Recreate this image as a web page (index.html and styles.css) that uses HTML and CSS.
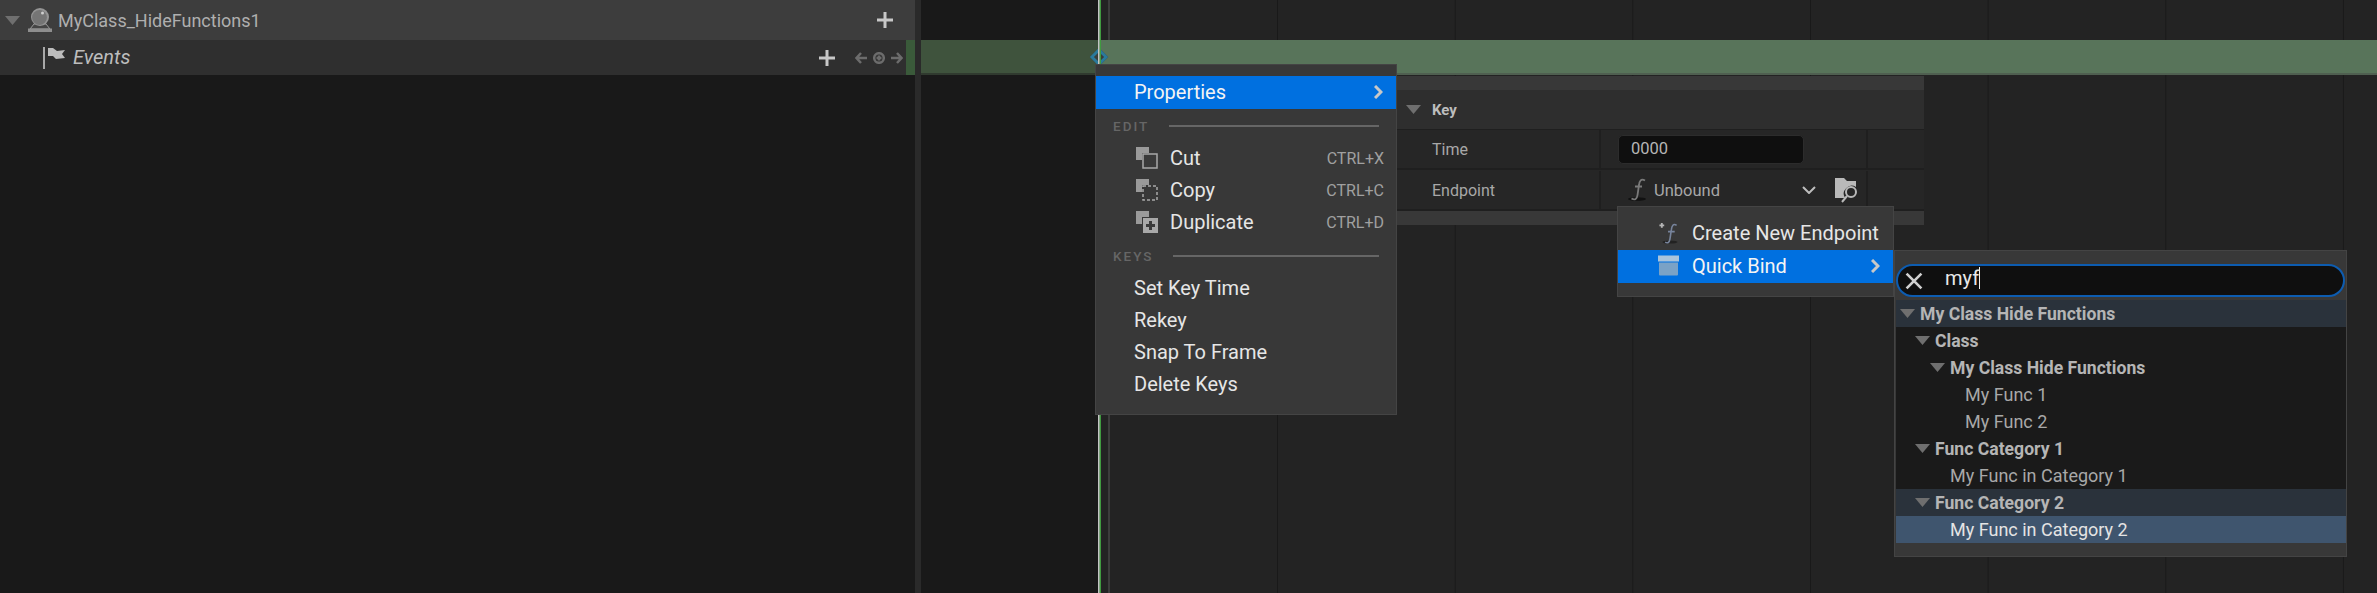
FILE: index.html
```html
<!DOCTYPE html>
<html lang="en">
<head>
    <meta charset="UTF-8">
    <title>Sequencer - Quick Bind</title>
    <link rel="stylesheet" href="styles.css">
</head>
<body>
    <div class="outliner">
        <div class="binding-row">
            <svg class="tri tri-outliner" viewBox="0 0 15 9"><path d="M0 0h15L7.5 9z"/></svg>
            <svg class="actor-icon" viewBox="0 0 24 24">
                <path d="M6 16h12l4 5H2z" fill="#454545" stroke="#9a9a9a" stroke-width="1"/>
                <circle cx="12" cy="9" r="9" fill="#959595"/>
                <circle cx="11.500" cy="9.500" r="7.400" fill="#757575"/>
                <circle cx="14.500" cy="5" r="1.500" fill="#cfcfcf"/>
                <path d="M0 20.500h24V24H0z" fill="#8e8e8e"/>
            </svg>
            <span class="binding-name">MyClass_HideFunctions1</span>
            <svg class="plus" viewBox="0 0 16 16"><path d="M6.500 0h3v6.500H16v3H9.500V16h-3V9.500H0v-3h6.500z"/></svg>
            <span class="binding-end"></span>
        </div>
        <div class="track-row">
            <svg class="flag-icon" viewBox="0 0 23 22">
                <path d="M0 0h2v22H0z" fill="#a8a8a8"/>
                <path d="M5 1h5l4 3 8-1-3 4 3 4-9 1-3-3H5z" fill="#bdbdbd"/>
            </svg>
            <span class="track-name">Events</span>
            <svg class="plus plus-track" viewBox="0 0 16 16"><path d="M6.500 0h3v6.500H16v3H9.500V16h-3V9.500H0v-3h6.500z"/></svg>
            <div class="key-nav">
                <svg viewBox="0 0 12 12"><path d="M6 1 1.500 6 6 11M2 6h10" /></svg>
                <svg viewBox="0 0 12 12"><circle cx="6" cy="6" r="4.800"/><path d="M6 3.500v5M3.500 6h5"/></svg>
                <svg viewBox="0 0 12 12"><path d="M6 1l4.500 5L6 11M10 6H0"/></svg>
            </div>
            <span class="track-tint"></span>
        </div>
    </div>

    <div class="splitter"></div>

    <div class="timeline">
        <div class="track-bar">
            <div class="bar-before"></div>
            <div class="bar-after"></div>
        </div>
    </div>

    <div class="key-diamond"></div>
    <div class="playhead"></div>

    <div class="details">
        <div class="details-cap"></div>
        <div class="details-header">
            <svg class="tri" viewBox="0 0 15 9"><path d="M0 0h15L7.5 9z"/></svg>
            <span>Key</span>
        </div>
        <div class="details-row">
            <div class="details-name">Time</div>
            <div class="details-value">
                <div class="num-input">0000</div>
            </div>
            <div class="details-ext"></div>
        </div>
        <div class="details-row details-row-last">
            <div class="details-name">Endpoint</div>
            <div class="details-value">
                <svg class="func-icon" viewBox="0 0 20 24">
                    <ellipse cx="9" cy="21" rx="9" ry="1.800" fill="#111"/>
                    <path d="M17 2.500C13 0 11.500 3 11 7L9.500 17C9 21 7 22.500 3.500 20.500M7 8.500h7" fill="none" stroke="#7a7a7a" stroke-width="1.800"/>
                </svg>
                <span class="unbound">Unbound</span>
                <svg class="chevron-down" viewBox="0 0 14 8"><path d="M1 1l6 6 6-6"/></svg>
                <svg class="folder-search" viewBox="0 0 24 25">
                    <path d="M0 0h9l3 3h9v6a8 8 0 0 0-11 11H0z" fill="#b9b9b9"/>
                    <circle cx="16" cy="14" r="5" fill="none" stroke="#b9b9b9" stroke-width="2"/>
                    <path d="M12 18l-5 6" stroke="#b9b9b9" stroke-width="2"/>
                </svg>
            </div>
            <div class="details-ext"></div>
        </div>
        <div class="details-cap"></div>
    </div>

    <div class="menu menu-key">
        <div class="menu-item active">
            <span class="menu-label">Properties</span>
            <svg class="chevron" viewBox="0 0 9 14"><path d="M1 1l6 6-6 6"/></svg>
        </div>
        <div class="menu-section"><span>EDIT</span><i></i></div>
        <div class="menu-item with-icon">
            <svg class="edit-icon" viewBox="0 0 22 22">
                <path d="M0 0h13v6H6v7H0z" fill="#9a9a9a"/>
                <rect x="7" y="7" width="14" height="14" fill="#3a3a3a" stroke="#a8a8a8" stroke-width="1.500"/>
            </svg>
            <span class="menu-label">Cut</span>
            <span class="shortcut">CTRL+X</span>
        </div>
        <div class="menu-item with-icon">
            <svg class="edit-icon" viewBox="0 0 22 22">
                <path d="M0 0h13v6H6v7H0z" fill="#9a9a9a"/>
                <rect x="7" y="7" width="14" height="14" fill="none" stroke="#a8a8a8" stroke-width="1.500" stroke-dasharray="3 2"/>
            </svg>
            <span class="menu-label">Copy</span>
            <span class="shortcut">CTRL+C</span>
        </div>
        <div class="menu-item with-icon">
            <svg class="edit-icon" viewBox="0 0 22 22">
                <path d="M0 0h13v6H6v7H0z" fill="#9a9a9a"/>
                <path d="M7 7h15v15H7z" fill="#a8a8a8"/>
                <path d="M13 10h3v3h3v3h-3v3h-3v-3h-3v-3h3z" fill="#3a3a3a"/>
            </svg>
            <span class="menu-label">Duplicate</span>
            <span class="shortcut">CTRL+D</span>
        </div>
        <div class="menu-section"><span>KEYS</span><i></i></div>
        <div class="menu-item"><span class="menu-label">Set Key Time</span></div>
        <div class="menu-item"><span class="menu-label">Rekey</span></div>
        <div class="menu-item"><span class="menu-label">Snap To Frame</span></div>
        <div class="menu-item"><span class="menu-label">Delete Keys</span></div>
    </div>

    <div class="menu menu-endpoint">
        <div class="menu-item">
            <svg class="bind-icon" viewBox="0 0 21 22">
                <path d="M1 2.500h5M3.500 0v5" stroke="#b5b5b5" stroke-width="2"/>
                <ellipse cx="12" cy="20" rx="8" ry="1.600" fill="#222"/>
                <path d="M19 2.500C15.500 0 14 3 13.500 7L12 17C11.500 20.500 9.500 21.500 7 20M10 9h7" fill="none" stroke="#77849c" stroke-width="1.700"/>
            </svg>
            <span class="menu-label">Create New Endpoint</span>
        </div>
        <div class="menu-item active">
            <svg class="bind-icon" viewBox="0 0 21 20">
                <path d="M0 0h21v6H0z" fill="#a9c4dc"/>
                <path d="M1 7h19v12a1 1 0 0 1-1 1H2a1 1 0 0 1-1-1z" fill="#7aa2c6"/>
            </svg>
            <span class="menu-label">Quick Bind</span>
            <svg class="chevron" viewBox="0 0 9 14"><path d="M1 1l6 6-6 6"/></svg>
        </div>
    </div>

    <div class="menu menu-bind">
        <div class="search-box">
            <svg class="clear-icon" viewBox="0 0 17 17"><path d="M1.500 1.500l14 14M15.500 1.500l-14 14"/></svg>
            <span class="search-text">myf</span>
            <span class="caret"></span>
        </div>
        <ul class="bind-tree">
            <li class="group depth-0 tinted"><svg class="tri" viewBox="0 0 15 9"><path d="M0 0h15L7.500 9z"/></svg>My Class Hide Functions</li>
            <li class="group depth-1"><svg class="tri" viewBox="0 0 15 9"><path d="M0 0h15L7.500 9z"/></svg>Class</li>
            <li class="group depth-2"><svg class="tri" viewBox="0 0 15 9"><path d="M0 0h15L7.500 9z"/></svg>My Class Hide Functions</li>
            <li class="leaf depth-3">My Func 1</li>
            <li class="leaf depth-3">My Func 2</li>
            <li class="group depth-1"><svg class="tri" viewBox="0 0 15 9"><path d="M0 0h15L7.500 9z"/></svg>Func Category 1</li>
            <li class="leaf depth-2">My Func in Category 1</li>
            <li class="group depth-1 tinted"><svg class="tri" viewBox="0 0 15 9"><path d="M0 0h15L7.500 9z"/></svg>Func Category 2</li>
            <li class="leaf depth-2 selected">My Func in Category 2</li>
        </ul>
    </div>
</body>
</html>
```

FILE: styles.css
```css
* {
    box-sizing: border-box;
}
html, body {
    height: 100%;
}
body {
    margin: 0;
    display: flex;
    position: relative;
    overflow: hidden;
    background: #232323;
    font-family: Roboto, "Liberation Sans", sans-serif;
    font-size: 16px;
    color: #c0c0c0;
}

/* left column */
.outliner {
    width: 915px;
    flex: none;
    background: #191919;
}
.binding-row, .track-row {
    display: flex;
    align-items: center;
}
.binding-row {
    height: 40px;
    background: #3d3d3d;
    padding-left: 5px;
}
.track-row {
    height: 35px;
    background: #2f2f2f;
    padding-left: 43px;
}
.tri {
    width: 15px;
    height: 9px;
    flex: none;
    fill: #6f6f6f;
}
.actor-icon {
    width: 24px;
    height: 24px;
    margin-left: 8px;
    flex: none;
}
.binding-name {
    margin-left: 6px;
    font-size: 18px;
    color: #afafaf;
}
.plus {
    width: 16px;
    height: 16px;
    fill: #c8c8c8;
    flex: none;
    margin-left: auto;
}
.binding-end {
    width: 22px;
    flex: none;
}
.flag-icon {
    width: 23px;
    height: 22px;
    flex: none;
}
.track-name {
    margin: 0 0 2px 7px;
    font-size: 20px;
    font-style: italic;
    color: #bdbdbd;
}
.key-nav {
    display: flex;
    gap: 6px;
    margin-left: 20px;
}
.key-nav svg {
    width: 12px;
    height: 12px;
    fill: none;
    stroke: #6c6c6c;
    stroke-width: 2.500;
}
.track-tint {
    width: 9px;
    height: 35px;
    margin-left: 3px;
    background: #3a5a3a;
}

.splitter {
    width: 6px;
    flex: none;
    background: #2a2a2a;
}

/* timeline */
.timeline {
    flex: 1;
    padding-top: 40px;
    background-color: #232323;
    background-image:
        linear-gradient(90deg, #191919 177px, transparent 177px),
        linear-gradient(90deg, transparent 187px, #3c3c3c 187px, #3c3c3c 189px, transparent 189px),
        linear-gradient(90deg, #191919 1px, transparent 1px);
    background-size: 100% 100%, 100% 100%, 177.67px 100%;
    background-position: 0 0, 0 0, 356px 0;
}
.track-bar {
    display: flex;
    height: 35px;
}
.bar-before {
    width: 177px;
    background: #3f533d;
    border-bottom: 2px solid #303a2f;
}
.bar-after {
    flex: 1;
    background: #58745a;
    border-bottom: 2px solid #4f5f50;
}
.playhead {
    position: absolute;
    left: 1098px;
    top: 0;
    width: 3px;
    height: 100%;
    background: linear-gradient(90deg, #c4c4c4 1px, #7fa37f 1px, #7fa37f 2px, #3f9a3f 2px);
}
.key-diamond {
    position: absolute;
    left: 1090px;
    top: 48px;
    width: 18px;
    height: 18px;
    transform: rotate(45deg) scale(.72);
    background: #3a3f3a;
    border: 4px solid #2a7a9c;
}

/* key details */
.details {
    position: absolute;
    left: 1380px;
    top: 76px;
    width: 544px;
    background: #262626;
}
.details-cap {
    height: 14px;
    background: #383838;
}
.details-header {
    display: flex;
    align-items: center;
    height: 40px;
    padding-left: 26px;
    gap: 11px;
    background: #2e2e2e;
    border-bottom: 1px solid #1f1f1f;
    font-size: 15px;
    font-weight: 700;
    color: #bdbdbd;
}
.details-row {
    display: grid;
    grid-template-columns: 221px 267px 1fr;
    height: 40px;
    border-bottom: 2px solid #1f1f1f;
}
.details-row-last {
    height: 41px;
    padding-top: 1px;
}
.details-name {
    display: flex;
    align-items: center;
    padding-left: 52px;
    font-size: 16px;
    color: #a8a8a8;
    border-right: 2px solid #1f1f1f;
}
.details-value {
    display: flex;
    align-items: center;
    padding-left: 17px;
    border-right: 2px solid #1f1f1f;
}
.num-input {
    width: 186px;
    height: 29px;
    padding-left: 12px;
    background: #0f0f0f;
    border: 1px solid #2c2c2c;
    border-radius: 5px;
    font-size: 16.500px;
    line-height: 25px;
    color: #b5b5b5;
}
.func-icon {
    width: 20px;
    height: 24px;
    margin-left: 10px;
    flex: none;
}
.unbound {
    margin-left: 6px;
    font-size: 16.500px;
    color: #a8a8a8;
}
.chevron-down {
    width: 14px;
    height: 8px;
    margin-left: 82px;
    fill: none;
    stroke: #bdbdbd;
    stroke-width: 2;
}
.folder-search {
    width: 24px;
    height: 25px;
    margin-left: 19px;
    flex: none;
}

/* menus */
.menu {
    position: absolute;
    background: #383838;
    border: 1px solid #444;
}
.menu-key {
    left: 1095px;
    top: 64px;
    width: 302px;
    height: 351px;
    padding-top: 11px;
}
.menu-endpoint {
    left: 1617px;
    top: 206px;
    width: 277px;
    height: 91px;
    padding-top: 11px;
}
.menu-bind {
    left: 1894px;
    top: 250px;
    width: 453px;
    height: 307px;
    padding: 13px 0 0 1px;
}
.menu-item {
    display: flex;
    align-items: center;
    height: 32px;
    padding-left: 38px;
    padding-bottom: 2px;
    font-size: 20px;
    color: #e6e6e6;
}
.menu-item.active {
    height: 33px;
    background: #0070e0;
    color: #f4f4f4;
}
.menu-item .chevron {
    width: 9px;
    height: 14px;
    margin-left: auto;
    margin-right: 13px;
    fill: none;
    stroke: #c8c8c8;
    stroke-width: 3;
}
.with-icon {
    padding-left: 40px;
    padding-right: 12px;
}
.edit-icon {
    width: 22px;
    height: 22px;
    margin-right: 12px;
    flex: none;
}
.shortcut {
    margin-left: auto;
    font-size: 16px;
    color: #a0a0a0;
}
.menu-section {
    display: flex;
    align-items: center;
    height: 34px;
    padding: 0 17px 0 17px;
    font-size: 13.500px;
    font-weight: 500;
    letter-spacing: 2px;
    color: #666;
}
.menu-section i {
    flex: 1;
    height: 2px;
    margin-left: 20px;
    background: #666;
}
.menu-endpoint .menu-item {
    padding-left: 40px;
}
.bind-icon {
    width: 21px;
    height: 21px;
    margin-right: 13px;
    flex: none;
}

/* quick bind list */
.search-box {
    display: flex;
    align-items: center;
    height: 33px;
    padding-left: 7px;
    background: #0f0f0f;
    border: 2px solid #0d5cb0;
    border-radius: 17px;
    margin-right: 1px;
}
.clear-icon {
    width: 18px;
    height: 18px;
    fill: none;
    stroke: #d0d0d0;
    stroke-width: 2.500;
    flex: none;
}
.search-text {
    margin: 0 0 5px 22px;
    font-size: 20px;
    color: #e8e8e8;
}
.caret {
    width: 1px;
    height: 22px;
    margin-bottom: 5px;
    background: #f0f0f0;
}
.bind-tree {
    list-style: none;
    margin: 3px 0 0;
    padding: 0;
    background: #1a1a1a;
}
.bind-tree li {
    display: flex;
    align-items: center;
    height: 27px;
    font-size: 18px;
    color: #a8a8a8;
}
.bind-tree .tri {
    margin-right: 5px;
}
.bind-tree .group {
    font-size: 17.600px;
    font-weight: 700;
    color: #b5b5b5;
}
.bind-tree .tinted {
    background: #2a323b;
}
.bind-tree .selected {
    background: #3f556e;
    color: #e4e4e4;
}
.depth-0 { padding-left: 4px; }
.depth-1 { padding-left: 19px; }
.depth-2 { padding-left: 34px; }
.depth-3 { padding-left: 49px; }
.leaf.depth-2 { padding-left: 54px; }
.leaf.depth-3 { padding-left: 69px; }
```
